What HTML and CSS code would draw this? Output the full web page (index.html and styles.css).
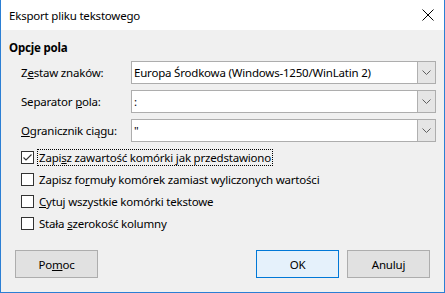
FILE: index.html
```html
<!DOCTYPE html>
<html lang="pl">
<head>
  <meta charset="UTF-8" />
  <title>Eksport pliku tekstowego</title>
  <link rel="stylesheet" href="styles.css">
</head>
<body>
  <div class="window">
    <div class="titlebar">
      <span class="title">Eksport pliku tekstowego</span>
      <svg class="close" width="12" height="12" viewBox="0 0 12 12">
        <path d="M0.5 0.5 L11.5 11.5 M11.5 0.5 L0.5 11.5" stroke="#000" stroke-width="1" fill="none"/>
      </svg>
    </div>

    <div class="content">
      <div class="group-title">Opcje pola</div>

      <div class="fields">
        <label>Z<u>e</u>staw znaków:</label>
        <div class="combo">
          <span class="value">Europa Środkowa (Windows-1250/WinLatin 2)</span>
          <span class="drop"><svg width="9" height="5" viewBox="0 0 9 5"><path d="M0.5 0.5 L4.5 4.5 L8.5 0.5" stroke="#606060" fill="none"/></svg></span>
        </div>

        <label>Separator <u>p</u>ola:</label>
        <div class="combo">
          <span class="value">:</span>
          <span class="drop"><svg width="9" height="5" viewBox="0 0 9 5"><path d="M0.5 0.5 L4.5 4.5 L8.5 0.5" stroke="#606060" fill="none"/></svg></span>
        </div>

        <label><u>O</u>granicznik ciągu:</label>
        <div class="combo">
          <span class="value">"</span>
          <span class="drop"><svg width="9" height="5" viewBox="0 0 9 5"><path d="M0.5 0.5 L4.5 4.5 L8.5 0.5" stroke="#606060" fill="none"/></svg></span>
        </div>
      </div>

      <div class="checks">
        <div class="check">
          <span class="box"><svg width="11" height="11" viewBox="0 0 11 11"><path d="M1.5 5.5 L4 8 L9.5 2.5" stroke="#333" stroke-width="1.1" fill="none"/></svg></span>
          <span class="text focused">Zapi<u>s</u>z zawartość komórki jak przedstawiono</span>
        </div>
        <div class="check">
          <span class="box"></span>
          <span class="text">Zapisz fo<u>r</u>muły komórek zamiast wyliczonych wartości</span>
        </div>
        <div class="check">
          <span class="box"></span>
          <span class="text"><u>C</u>ytuj wszystkie komórki tekstowe</span>
        </div>
        <div class="check">
          <span class="box"></span>
          <span class="text">Stała <u>s</u>zerokość kolumny</span>
        </div>
      </div>

      <div class="buttons">
        <button class="btn">Po<u>m</u>oc</button>
        <div class="spacer"></div>
        <button class="btn default">OK</button>
        <button class="btn">Anuluj</button>
      </div>
    </div>
  </div>
</body>
</html>
```

FILE: styles.css
```css
* {
  box-sizing: border-box;
}
body {
  margin: 0;
  font-family: "Noto Sans", "Open Sans", sans-serif;
  font-size: 11.5px;
  letter-spacing: -0.2px;
  color: #000;
}
.window {
  width: 445px;
  height: 293px;
  border: 1px solid #2b7fd4;
  border-top: none;
  background: #f0f0f0;
  display: flex;
  flex-direction: column;
}
.titlebar {
  height: 30px;
  background: #fff;
  display: flex;
  align-items: center;
  padding: 0 9px 0 8px;
}
.title {
  flex: 1;
}
.close {
  margin-right: 1px;
}
.content {
  flex: 1;
  padding: 9px 8px 0 8px;
  display: flex;
  flex-direction: column;
}
.group-title {
  font-weight: bold;
  height: 18px;
  line-height: 18px;
}
.fields {
  display: grid;
  grid-template-columns: 110px 305px;
  row-gap: 6px;
  margin: 4px 0 0 12px;
  align-items: center;
}
.fields label {
  line-height: 23px;
}
.combo {
  height: 23px;
  background: #fff;
  border: 1px solid #adadad;
  display: flex;
  align-items: center;
}
.combo .value {
  flex: 1;
  padding-left: 2px;
}
.combo .drop {
  width: 18px;
  height: 21px;
  background: #e5e5e5;
  border-left: 1px solid #b0b0b0;
  display: flex;
  align-items: center;
  justify-content: center;
}
.checks {
  margin: 7px 0 0 12px;
  display: flex;
  flex-direction: column;
  gap: 5px;
}
.check {
  display: flex;
  align-items: center;
  height: 17px;
}
.box {
  width: 13px;
  height: 13px;
  border: 1px solid #333;
  background: #fff;
  display: flex;
  align-items: center;
  justify-content: center;
  margin-right: 3px;
}
.check .text {
  padding: 0 1px;
  border: 1px solid transparent;
}
.check .text.focused {
  border: 1px dotted #000;
}
.buttons {
  margin-top: auto;
  margin-bottom: 14px;
  padding: 0 6px;
  display: flex;
  gap: 8px;
}
.spacer {
  flex: 1;
}
.btn {
  width: 83px;
  height: 28px;
  font-family: inherit;
  font-size: 11.5px;
  letter-spacing: -0.2px;
  background: #e1e1e1;
  border: 1px solid #adadad;
  padding: 0;
}
.btn.default {
  background: #e5f1fb;
  border-color: #0078d7;
}
```
